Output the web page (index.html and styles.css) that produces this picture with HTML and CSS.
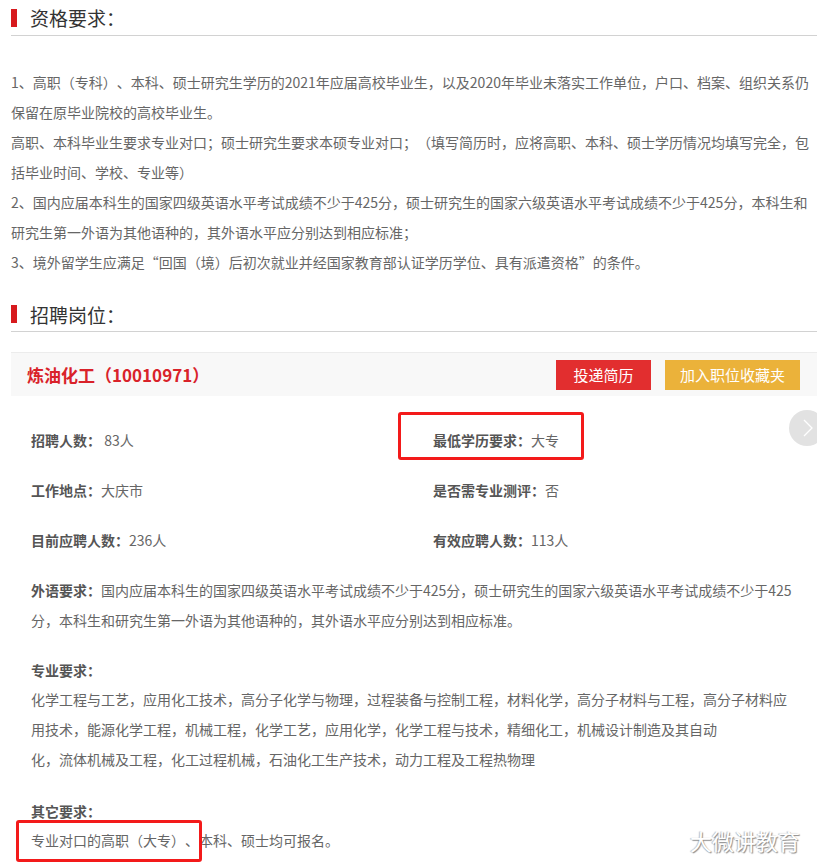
FILE: index.html
```html
<!DOCTYPE html>
<html lang="zh-CN">
<head>
<meta charset="utf-8">
<title>资格要求</title>
<link rel="stylesheet" href="styles.css">
</head>
<body>
<div class="page">
  <div class="sec-head"><span class="bar"></span><h2>资格要求：</h2></div>
  <div class="para">
    <div class="ln">1、高职（专科）、本科、硕士研究生学历的2021年应届高校毕业生，以及2020年毕业未落实工作单位，户口、档案、组织关系仍</div>
    <div class="ln">保留在原毕业院校的高校毕业生。</div>
    <div class="ln">高职、本科毕业生要求专业对口；硕士研究生要求本硕专业对口；（填写简历时，应将高职、本科、硕士学历情况均填写完全，包</div>
    <div class="ln">括毕业时间、学校、专业等）</div>
    <div class="ln">2、国内应届本科生的国家四级英语水平考试成绩不少于425分，硕士研究生的国家六级英语水平考试成绩不少于425分，本科生和</div>
    <div class="ln">研究生第一外语为其他语种的，其外语水平应分别达到相应标准；</div>
    <div class="ln">3、境外留学生应满足“回国（境）后初次就业并经国家教育部认证学历学位、具有派遣资格”的条件。</div>
  </div>

  <div class="sec-head sec2"><span class="bar"></span><h2>招聘岗位：</h2></div>

  <div class="card">
    <div class="card-head">
      <div class="job-title">炼油化工（10010971）</div>
      <div class="btns">
        <span class="btn btn-red">投递简历</span>
        <span class="btn btn-yellow">加入职位收藏夹</span>
      </div>
    </div>
    <div class="card-body">
      <div class="grid">
        <div class="cell"><b>招聘人数：</b> 83人</div>
        <div class="cell"><b>最低学历要求：</b>大专</div>
        <div class="cell"><b>工作地点：</b>大庆市</div>
        <div class="cell"><b>是否需专业测评：</b>否</div>
        <div class="cell"><b>目前应聘人数：</b>236人</div>
        <div class="cell"><b>有效应聘人数：</b>113人</div>
      </div>
      <div class="block lang">
        <div class="ln"><b>外语要求：</b>国内应届本科生的国家四级英语水平考试成绩不少于425分，硕士研究生的国家六级英语水平考试成绩不少于425</div>
        <div class="ln">分，本科生和研究生第一外语为其他语种的，其外语水平应分别达到相应标准。</div>
      </div>
      <div class="block major">
        <div class="label">专业要求：</div>
        <div class="ln">化学工程与工艺，应用化工技术，高分子化学与物理，过程装备与控制工程，材料化学，高分子材料与工程，高分子材料应</div>
        <div class="ln">用技术，能源化学工程，机械工程，化学工艺，应用化学，化学工程与技术，精细化工，机械设计制造及其自动</div>
        <div class="ln">化，流体机械及工程，化工过程机械，石油化工生产技术，动力工程及工程热物理</div>
      </div>
      <div class="block other">
        <div class="label">其它要求：</div>
        <div class="ln">专业对口的高职（大专）、本科、硕士均可报名。</div>
      </div>
    </div>
  </div>

  <div class="next-arrow"><svg width="36" height="36" viewBox="0 0 36 36"><polyline points="15,10 23,18 15,26" fill="none" stroke="#fff" stroke-width="1.3"/></svg></div>
  <div class="mark mark1"></div>
  <div class="mark mark2"></div>
  <div class="watermark">大微讲教育</div>
</div>
</body>
</html>
```

FILE: styles.css
```css
html, body {
  margin: 0;
  padding: 0;
  background: #fff;
}
body {
  font-family: "Noto Sans CJK SC", "Microsoft YaHei", sans-serif;
  font-size: 14px;
  color: #666;
  width: 817px;
  height: 866px;
  overflow: hidden;
  text-spacing-trim: space-all;
}
.page {
  position: relative;
  padding-left: 11px;
  height: 866px;
  box-sizing: border-box;
}
.sec-head {
  display: flex;
  align-items: center;
  height: 35px;
  border-bottom: 1px solid #d2d2d2;
}
.sec-head .bar {
  width: 6px;
  height: 18px;
  background: #d71a1e;
  margin-right: 13px;
}
.sec-head h2 {
  margin: 0;
  font-weight: normal;
  font-size: 19px;
  color: #333;
  line-height: 35px;
}
.sec2 {
  height: 34px;
  margin-top: 20px;
}
.para {
  padding-top: 31px;
}
.ln {
  line-height: 30px;
  white-space: nowrap;
}
.card {
  margin-top: 20px;
}
.card-head {
  height: 43px;
  border-top: 1px solid #ececec;
  background: #f8f8f8;
  display: flex;
  align-items: center;
  justify-content: space-between;
  padding-left: 16px;
  padding-right: 17px;
}
.job-title {
  color: #d9222a;
  font-weight: bold;
  font-size: 17px;
}
.btns {
  display: flex;
  gap: 14px;
}
.btn {
  display: inline-block;
  height: 30px;
  line-height: 30px;
  color: #fff;
  font-size: 15px;
  text-align: center;
}
.btn-red {
  width: 95px;
  background: #e22e2f;
}
.btn-yellow {
  width: 135px;
  background: #ebb23a;
}
.card-body {
  padding-left: 20px;
  padding-top: 29px;
}
.grid {
  display: grid;
  grid-template-columns: 402px 1fr;
  row-gap: 20px;
}
.cell {
  line-height: 30px;
}
b {
  color: #555;
}
.block {
  margin-top: 20px;
}
.major {
  margin-top: 21px;
}
.other {
  margin-top: 23px;
}
.label {
  line-height: 28px;
  font-weight: bold;
  color: #555;
}
.next-arrow {
  position: absolute;
  left: 789px;
  top: 410px;
  width: 36px;
  height: 36px;
  border-radius: 50%;
  background: #e2e2e2;
}
.next-arrow svg {
  display: block;
}
.mark {
  position: absolute;
  border: 3px solid #f31a1a;
  border-radius: 3px;
  box-sizing: border-box;
}
.mark1 {
  left: 398px;
  top: 412px;
  width: 186px;
  height: 48px;
}
.mark2 {
  left: 16px;
  top: 820px;
  width: 186px;
  height: 42px;
}
.watermark {
  position: absolute;
  left: 690px;
  top: 824px;
  font-size: 22px;
  color: #fff;
  text-shadow: 1px 1px 1px #8a8a8a, -1px 0 1px #bbb;
}
```
